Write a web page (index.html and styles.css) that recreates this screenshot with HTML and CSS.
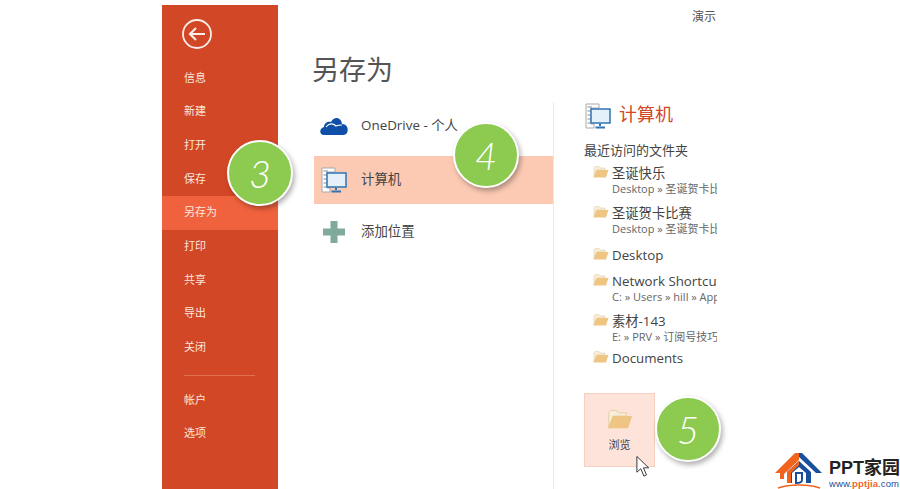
FILE: index.html
```html
<!DOCTYPE html>
<html lang="zh-CN">
<head>
    <meta charset="UTF-8">
    <title>另存为</title>
    <link rel="stylesheet" href="styles.css">
</head>
<body>
    <svg class="defs" width="0" height="0">
        <symbol id="folder" viewBox="0 0 16 13">
            <path d="M1 12V3l1-1.500h4l1 1.500h5v2H4z" fill="#f7edd8" stroke="#e3cfa6" stroke-width=".6"/>
            <path d="M.5 12.500L3.500 5H15.500L13 12.500z" fill="#eec583"/>
        </symbol>
        <symbol id="computer" viewBox="0 0 26 27">
            <path d="M1 1H14V5H6V21H9V25H1z" fill="#fff" stroke="#a9a9a9"/>
            <path d="M2.500 4H7M2.500 8H5M2.500 12H5M2.500 16H5M2.500 20H5" stroke="#8a8a8a"/>
            <rect x="6" y="6" width="19" height="14" fill="#e4f1fa" stroke="#2f74b5" stroke-width="1.500"/>
            <path d="M15 20.500V23M10.500 24.500H20" stroke="#2f74b5" stroke-width="2"/>
        </symbol>
    </svg>

    <div class="backstage">
        <nav class="sidebar">
            <div class="back-btn">
                <svg width="30" height="30" viewBox="0 0 30 30" fill="none" stroke="#fbeee8">
                    <circle cx="15" cy="15" r="14" stroke-width="1.800"/>
                    <path d="M23 15H8M14 9l-6 6 6 6" stroke-width="2.200"/>
                </svg>
            </div>
            <ul class="menu">
                <li>信息</li>
                <li>新建</li>
                <li>打开</li>
                <li>保存</li>
                <li class="active">另存为</li>
                <li>打印</li>
                <li>共享</li>
                <li>导出</li>
                <li>关闭</li>
            </ul>
            <div class="menu-line"></div>
            <ul class="menu">
                <li>帐户</li>
                <li>选项</li>
            </ul>
        </nav>

        <main class="content">
            <div class="doc-name">演示</div>
            <h1>另存为</h1>
            <div class="columns">
                <section class="places">
                    <div class="place">
                        <svg class="place-icon" width="28" height="20" viewBox="0 0 28 20">
                            <path d="M4 19C-1 19-1 12 4 11 4 7 8 5 11 6 14 0 21 1 22 8 27 8 29 13 27 17 26 18 25 19 23 19z" fill="#0f4fa8"/>
                            <path d="M6 11C9 7 13 7 16 10 18 9 20 9 22 9" fill="none" stroke="#fff" stroke-width="1.200"/>
                        </svg>
                        <span>OneDrive - 个人</span>
                    </div>
                    <div class="place selected">
                        <svg class="place-icon" width="26" height="27"><use href="#computer"/></svg>
                        <span>计算机</span>
                    </div>
                    <div class="place">
                        <svg class="place-icon" width="24" height="24" viewBox="0 0 24 24">
                            <path d="M8.500 1H15.500V8.500H23V15.500H15.500V23H8.500V15.500H1V8.500H8.500z" fill="#7fa99b"/>
                        </svg>
                        <span>添加位置</span>
                    </div>
                </section>

                <section class="detail">
                    <div class="detail-head">
                        <svg width="26" height="27"><use href="#computer"/></svg>
                        <h2>计算机</h2>
                    </div>
                    <h3>最近访问的文件夹</h3>
                    <ul class="recent">
                        <li>
                            <svg class="folder" width="16" height="13"><use href="#folder"/></svg>
                            <div class="name">圣诞快乐</div>
                            <div class="path">Desktop » 圣诞贺卡比赛</div>
                        </li>
                        <li>
                            <svg class="folder" width="16" height="13"><use href="#folder"/></svg>
                            <div class="name">圣诞贺卡比赛</div>
                            <div class="path">Desktop » 圣诞贺卡比赛</div>
                        </li>
                        <li>
                            <svg class="folder" width="16" height="13"><use href="#folder"/></svg>
                            <div class="name">Desktop</div>
                        </li>
                        <li>
                            <svg class="folder" width="16" height="13"><use href="#folder"/></svg>
                            <div class="name">Network Shortcuts</div>
                            <div class="path">C: » Users » hill » AppData</div>
                        </li>
                        <li>
                            <svg class="folder" width="16" height="13"><use href="#folder"/></svg>
                            <div class="name">素材-143</div>
                            <div class="path">E: » PRV » 订阅号技巧素材</div>
                        </li>
                        <li>
                            <svg class="folder" width="16" height="13"><use href="#folder"/></svg>
                            <div class="name">Documents</div>
                        </li>
                    </ul>
                    <div class="browse">
                        <svg width="26" height="21" viewBox="0 0 16 13"><use href="#folder"/></svg>
                        <span>浏览</span>
                    </div>
                </section>
            </div>
        </main>
    </div>

    <div class="step step-3">3</div>
    <div class="step step-4">4</div>
    <div class="step step-5">5</div>

    <svg class="cursor" width="14" height="23" viewBox="0 0 16 25">
        <path d="M1 1V19L5.500 15 9 23.500 12 22 8.500 14H14.500z" fill="#fff" stroke="#333" stroke-width="1.100"/>
    </svg>

    <div class="logo">
        <svg width="48" height="37" viewBox="0 0 48 37">
            <path d="M0 21L20 1H24V8L9 22V27H5V21z" fill="#f0641e"/>
            <path d="M24 1H27L47 21H41L24 5z" fill="#1a4f9c"/>
            <path d="M12 31V20L24 9 36 20V31H31V21L24 15 17 21V31z" fill="#1a4f9c"/>
            <path d="M12 20L24 9V13L16 21V31H12z" fill="#f0641e"/>
            <path d="M21 21H27V28C27 31 24 31 21 31z" fill="#fff" stroke="#1a4f9c" stroke-width="2"/>
            <path d="M3 36C14 32 34 32 45 36" fill="none" stroke="#f0641e" stroke-width="1.500"/>
        </svg>
        <div class="logo-text">
            <strong>PPT家园</strong>
            <small>www.<b>pptjia</b>.com</small>
        </div>
    </div>
</body>
</html>
```

FILE: styles.css
```css
body, html {
    margin: 0;
    padding: 0;
    background-color: #ffffff;
    font-family: "Open Sans", "Noto Sans CJK SC", sans-serif;
    height: 489px;
    overflow: hidden;
}

ul {
    list-style: none;
    margin: 0;
    padding: 0;
}

.defs {
    position: absolute;
}

.backstage {
    display: flex;
    width: 555px;
    height: 484px;
    margin-left: 162px;
    padding-top: 5px;
    overflow: hidden;
}

.sidebar {
    width: 116px;
    flex-shrink: 0;
    background-color: #d24726;
    color: #fbe6de;
    font-size: 11px;
}

.back-btn {
    height: 30px;
    padding: 14px 0 0 20px;
    margin-bottom: 12.5px;
}

.menu li {
    height: 33.7px;
    line-height: 32px;
    padding-left: 22px;
}

.menu li.active {
    background-color: #f0623e;
}

.menu-line {
    width: 71px;
    height: 1px;
    margin: 10px 0 8px 22px;
    background-color: #e2704f;
}

.content {
    flex: 1;
    min-width: 0;
    position: relative;
}

.doc-name {
    position: absolute;
    top: 2px;
    right: 1px;
    font-size: 12px;
    color: #555;
}

h1 {
    margin: 45px 0 0 34px;
    height: 52px;
    font-size: 27px;
    line-height: 40px;
    font-weight: 400;
    color: #555;
}

.columns {
    display: flex;
    height: 387px;
}

.places {
    width: 239px;
    margin-left: 36px;
    border-right: 1px solid #eaeaea;
}

.place {
    display: flex;
    align-items: center;
    height: 48px;
    margin-bottom: 6px;
    font-size: 13.4px;
    color: #444;
}

.place span {
    margin-bottom: 5px;
}

.place.selected {
    background-color: #fccab3;
    margin-bottom: 4px;
}

.place-icon {
    width: 30px;
    margin: 0 12px 0 5px;
}

.detail {
    flex: 1;
    min-width: 0;
    padding: 1px 0 0 31px;
    color: #444;
    overflow: hidden;
    white-space: nowrap;
}

.detail-head {
    display: flex;
    align-items: center;
    gap: 8px;
    height: 27px;
}

h2 {
    margin: 0 0 8px;
    font-size: 18px;
    font-weight: 400;
    color: #d24726;
}

h3 {
    margin: 11px 0 3px -1px;
    font-size: 13px;
    line-height: 18px;
    font-weight: 400;
    color: #444;
}

.recent {
    width: 125px;
    margin-left: 7px;
}

.recent li {
    position: relative;
    padding: 3px 0 6px 20px;
    overflow: hidden;
}

.recent li:nth-child(2) { padding-bottom: 8px; }
.recent li:nth-child(3) { padding-bottom: 7px; }
.recent li:nth-child(5) { padding-bottom: 3px; }

.folder {
    position: absolute;
    left: 1px;
    top: 3px;
}

.name {
    font-size: 13.3px;
    line-height: 16px;
}

.path {
    font-size: 11px;
    line-height: 15px;
    color: #666;
}

.browse {
    display: flex;
    flex-direction: column;
    align-items: center;
    box-sizing: border-box;
    width: 71px;
    height: 74px;
    margin: 21px 0 0 -1px;
    padding-top: 14px;
    gap: 7px;
    background-color: #fde3da;
    border: 1px solid #f7cfc0;
    font-size: 11px;
    color: #444;
}

.step {
    position: absolute;
    box-sizing: border-box;
    width: 66px;
    height: 66px;
    border: 2px solid #fff;
    border-radius: 50%;
    background-color: #8cca50;
    box-shadow: 2px 3px 5px rgba(0, 0, 0, 0.3);
    color: #fff;
    font-family: Lato, sans-serif;
    font-size: 38px;
    font-style: italic;
    font-weight: 300;
    line-height: 62px;
    text-align: center;
}

.step-3 { left: 227px; top: 140px; }
.step-4 { left: 453px; top: 122px; }
.step-5 { left: 655px; top: 396px; }

.cursor {
    position: absolute;
    left: 636px;
    top: 455px;
}

.logo {
    position: absolute;
    left: 775px;
    top: 452px;
    display: flex;
    gap: 6px;
}

.logo-text {
    display: flex;
    flex-direction: column;
    padding-top: 6px;
}

.logo-text strong {
    font-family: "Liberation Sans", "Noto Sans CJK SC", sans-serif;
    font-size: 18px;
    line-height: 21px;
    color: #222;
}

.logo-text small {
    font-family: "Liberation Sans", sans-serif;
    font-size: 9.5px;
    line-height: 9px;
    letter-spacing: 0.1px;
    color: #1a4f9c;
}

.logo-text b {
    color: #f0641e;
}
```
